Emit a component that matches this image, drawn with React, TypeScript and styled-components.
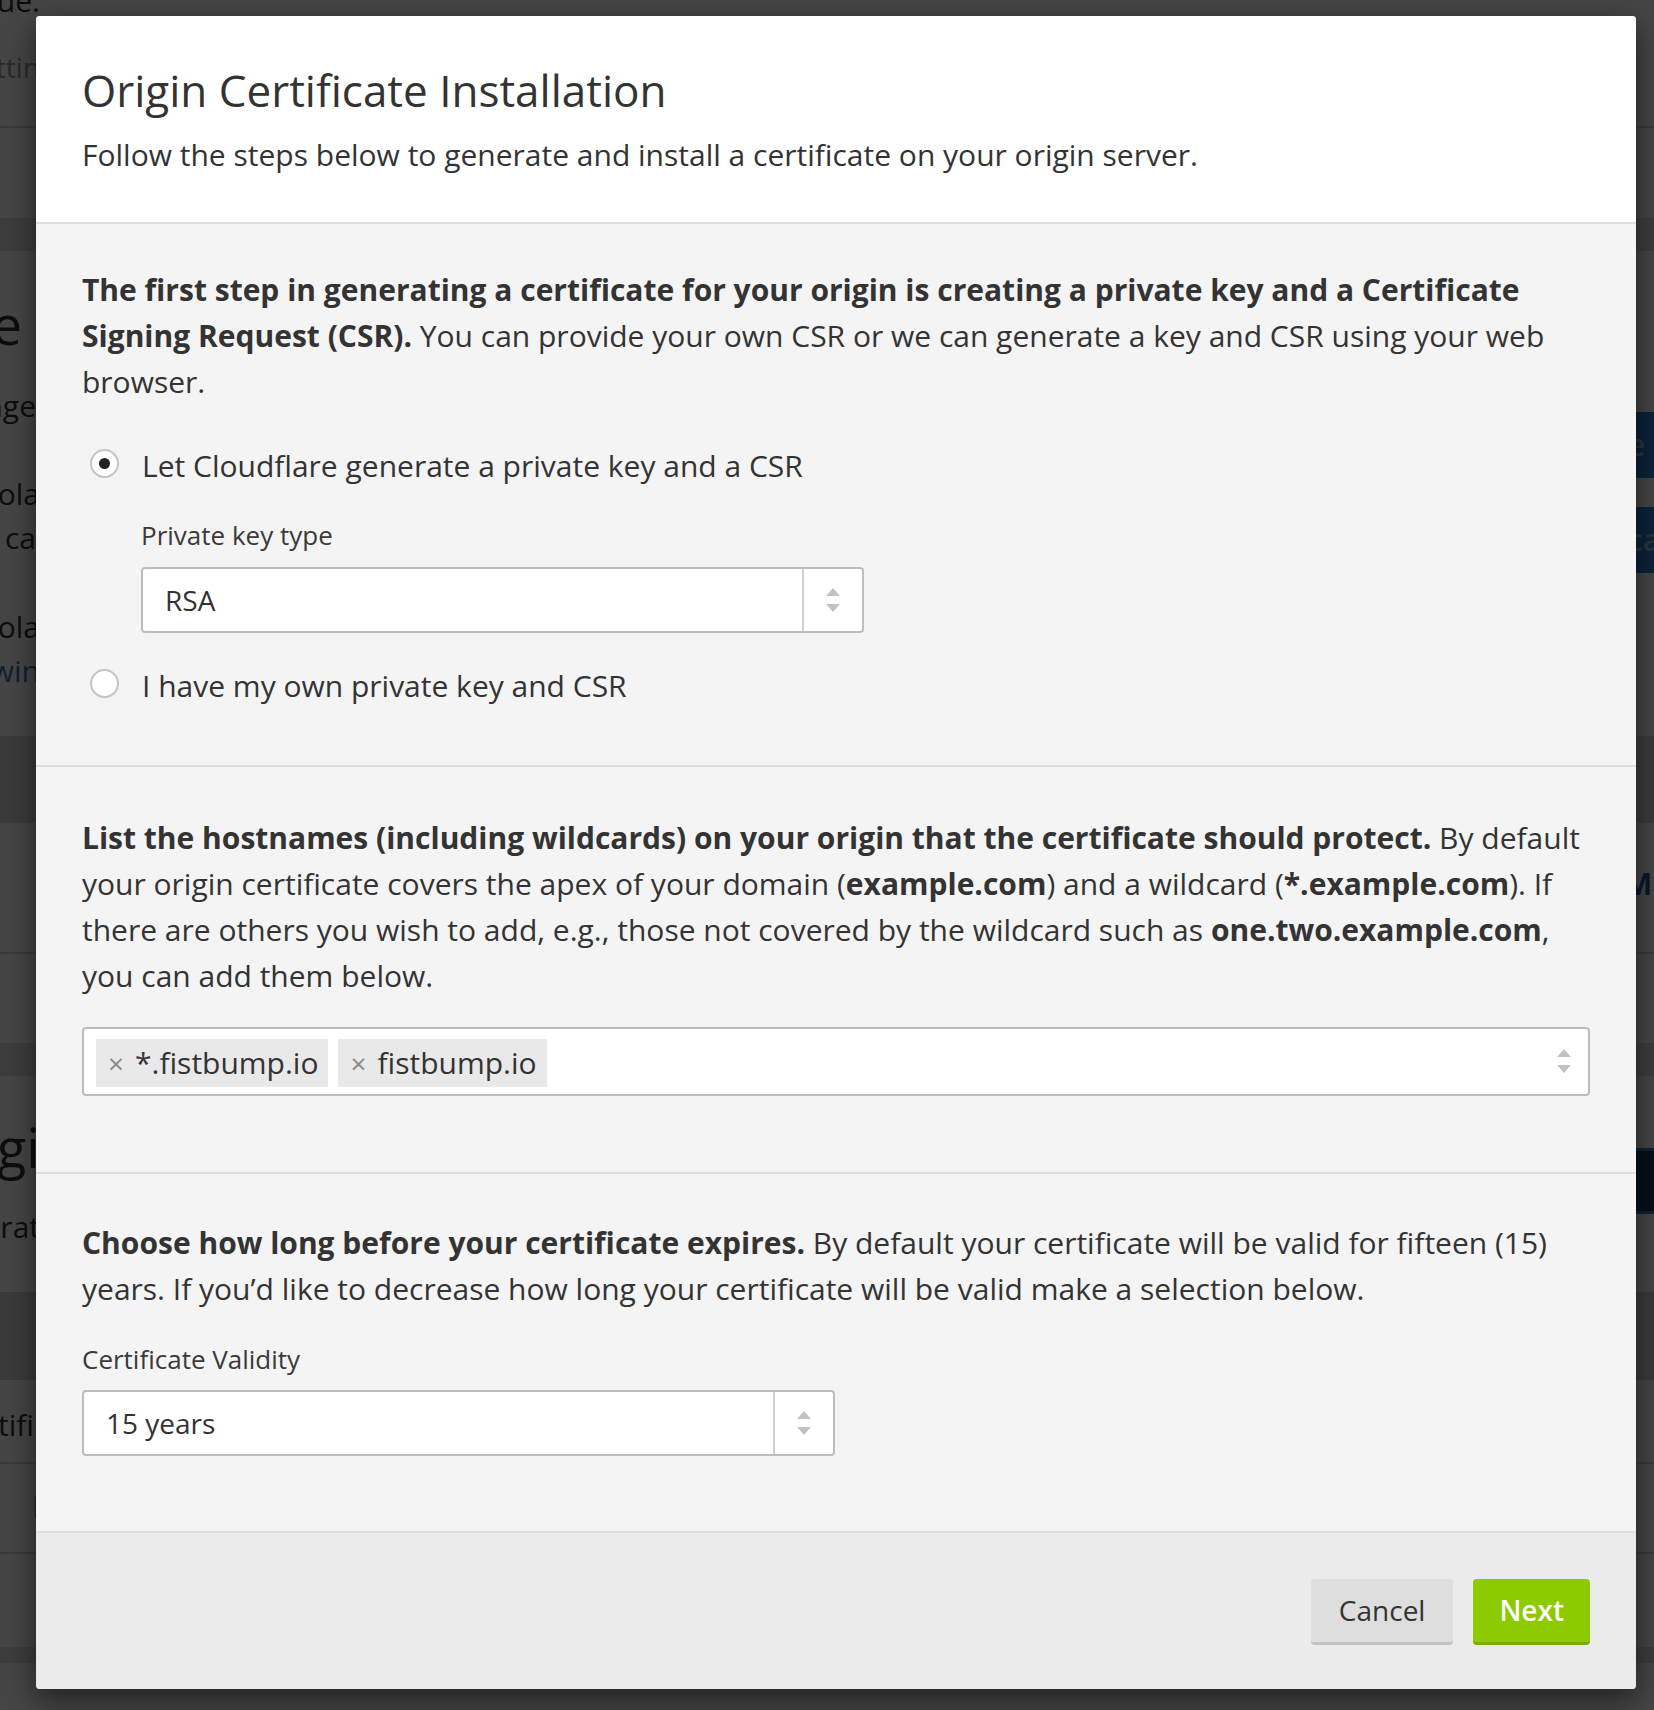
import React from 'react'
import styled, { createGlobalStyle, css } from 'styled-components'

const GlobalStyle = createGlobalStyle`
	html, body {
		margin: 0;
		padding: 0;
	}

	body {
		background: #444;
		font-family: 'Open Sans', 'Liberation Sans', sans-serif;
		color: #333;
	}
`

/* ---------- page behind the overlay ---------- */

const Screen = styled.div`
	position: relative;
	width: 1654px;
	height: 1710px;
	overflow: hidden;
	background: #fff;
`

const Page = styled.div`
	display: flex;
	flex-direction: column;
`

const PageRow = styled.div<{ $h: number; $tone?: string; $line?: boolean }>`
	height: ${p => p.$h}px;
	background: ${p => p.$tone || '#fff'};
	border-bottom: ${p => (p.$line ? '2px solid #d6d6d6' : 'none')};
	display: flex;
	justify-content: space-between;
	overflow: hidden;
`

const LeftCell = styled.div`
	width: 40px;
	display: flex;
	flex-direction: column;
	align-items: flex-end;
	overflow: hidden;
	white-space: nowrap;
`

const RightCell = styled.div`
	width: 30px;
	display: flex;
	flex-direction: column;
	align-items: flex-start;
	overflow: hidden;
	white-space: nowrap;
`

const Frag = styled.span<{ $size?: number; $color?: string; $top?: number; $weight?: number; $end?: number }>`
	display: block;
	font-size: ${p => p.$size || 30}px;
	line-height: 1.4;
	font-weight: ${p => p.$weight || 400};
	color: ${p => p.$color || '#333'};
	margin-top: ${p => p.$top || 0}px;
	margin-right: ${p => p.$end || 0}px;
`

const BlueBlock = styled.div<{ $top: number; $outline?: boolean }>`
	margin-top: ${p => p.$top}px;
	height: 66px;
	width: 120px;
	border-radius: 6px;
	font-size: 30px;
	font-weight: 600;
	line-height: 66px;
	padding-left: 4px;
	color: #9ac2ea;
	${p =>
		p.$outline
			? css`
					background: #163c63;
					border: 3px solid #3b7fc4;
					box-sizing: border-box;
			  `
			: css`
					background: #2b82d6;
			  `}
`

const Overlay = styled.div`
	position: absolute;
	inset: 0;
	background: rgba(0, 0, 0, 0.73);
`

/* ---------- modal ---------- */

const Modal = styled.div`
	position: absolute;
	left: 36px;
	top: 16px;
	width: 1600px;
	background: #f4f4f4;
	border-radius: 4px;
	overflow: hidden;
	box-shadow: 0 10px 30px rgba(0, 0, 0, 0.55);
`

const Header = styled.header`
	background: #fff;
	padding: 48px 46px 44px;
	border-bottom: 2px solid #dedede;
`

const Title = styled.h1`
	margin: 0;
	font-size: 44px;
	line-height: 52px;
	font-weight: 400;
	color: #333;
`

const Lead = styled.p`
	margin: 16px 0 0;
	font-size: 30px;
	line-height: 46px;
	color: #333;
`

const Section = styled.section<{ $top: number; $bottom: number; $divider?: boolean }>`
	padding: ${p => p.$top}px 46px ${p => p.$bottom}px;
	border-bottom: ${p => (p.$divider ? '2px solid #dedede' : 'none')};
`

const Text = styled.p`
	margin: 0;
	font-size: 30px;
	line-height: 46px;
	color: #333;

	strong {
		font-weight: 700;
	}
`

const RadioRow = styled.label<{ $top: number }>`
	display: flex;
	align-items: flex-start;
	margin-top: ${p => p.$top}px;
	font-size: 30px;
	line-height: 46px;
	color: #333;
`

const RadioMark = styled.span<{ $checked?: boolean }>`
	flex-shrink: 0;
	box-sizing: border-box;
	width: 29px;
	height: 29px;
	margin: 6px 23px 0 8px;
	border: 2px solid #c4c4c4;
	border-radius: 50%;
	background: #fff;
	display: flex;
	align-items: center;
	justify-content: center;

	&::after {
		content: '';
		display: ${p => (p.$checked ? 'block' : 'none')};
		width: 11px;
		height: 11px;
		border-radius: 50%;
		background: #222;
	}
`

const SubField = styled.div`
	padding-left: 59px;
	margin-top: 28px;
`

const FieldLabel = styled.div<{ $top?: number }>`
	margin-top: ${p => p.$top || 0}px;
	font-size: 26px;
	line-height: 36px;
	color: #3a3a3a;
`

const SelectBox = styled.div<{ $width: number; $top: number }>`
	box-sizing: border-box;
	display: flex;
	width: ${p => p.$width}px;
	height: 66px;
	margin-top: ${p => p.$top}px;
	background: #fff;
	border: 2px solid #bdbdbd;
	border-radius: 4px;
`

const SelectValue = styled.div`
	flex: 1;
	padding-left: 22px;
	font-size: 28px;
	line-height: 62px;
	color: #333;
`

const ArrowCell = styled.div<{ $divider?: boolean }>`
	display: flex;
	flex-direction: column;
	align-items: center;
	justify-content: center;
	gap: 8px;
	width: 58px;
	border-left: ${p => (p.$divider ? '2px solid #cfcfcf' : 'none')};
`

const Triangle = styled.span<{ $down?: boolean }>`
	width: 0;
	height: 0;
	border-left: 7.5px solid transparent;
	border-right: 7.5px solid transparent;
	${p =>
		p.$down
			? css`
					border-top: 8px solid #c2c2c2;
			  `
			: css`
					border-bottom: 8px solid #c2c2c2;
			  `}
`

const TagInput = styled.div`
	box-sizing: border-box;
	display: flex;
	align-items: flex-start;
	gap: 10px;
	height: 69px;
	margin-top: 28px;
	padding: 10px 0 0 12px;
	background: #fff;
	border: 2px solid #bdbdbd;
	border-radius: 4px;
`

const Tag = styled.span`
	display: flex;
	align-items: center;
	gap: 11px;
	height: 48px;
	padding: 0 10px 0 12px;
	background: #e9e9e9;
	font-size: 30px;
	line-height: 48px;
	color: #333;
`

const TagRemove = styled.span`
	color: #8a8a8a;
	font-size: 28px;
`

const TagArrows = styled.div`
	display: flex;
	flex-direction: column;
	gap: 8px;
	margin: 10px 17px 0 auto;
`

const Footer = styled.footer`
	display: flex;
	justify-content: flex-end;
	gap: 20px;
	padding: 46px 46px 44px;
	background: #ebebeb;
	border-top: 2px solid #dedede;
`

const Button = styled.button<{ $primary?: boolean }>`
	box-sizing: border-box;
	height: 66px;
	border: none;
	border-radius: 4px;
	font-family: inherit;
	font-size: 28px;
	line-height: 63px;
	cursor: pointer;
	${p =>
		p.$primary
			? css`
					padding: 0 26px;
					background: #8dca00;
					border-bottom: 3px solid #78ad00;
					color: #fff;
					font-weight: 600;
			  `
			: css`
					padding: 0 28px;
					background: #dedede;
					border-bottom: 3px solid #c2c2c2;
					color: #333;
					font-weight: 400;
			  `}
`

const SelectArrows = ({ divider }: { divider?: boolean }) => (
	<ArrowCell $divider={divider}>
		<Triangle />
		<Triangle $down />
	</ArrowCell>
)

const hostnames = ['*.fistbump.io', 'fistbump.io']

export default function App() {
	return (
		<Screen>
			<GlobalStyle />
			<Page>
				<PageRow $h={40}>
					<LeftCell><Frag $top={-20}>Value.</Frag></LeftCell>
					<RightCell />
				</PageRow>
				<PageRow $h={86} $line>
					<LeftCell><Frag $size={28} $color="#9a9a9a" $top={8}>Settin</Frag></LeftCell>
					<RightCell />
				</PageRow>
				<PageRow $h={90} />
				<PageRow $h={33} $tone="#e2e2e2" />
				<PageRow $h={485}>
					<LeftCell>
						<Frag $size={54} $top={36} $end={18}>Site</Frag>
						<Frag $top={22} $end={4}>Change</Frag>
						<Frag $top={46}>Sola</Frag>
						<Frag $top={2} $end={4}>your ca</Frag>
						<Frag $top={47}>Sola</Frag>
						<Frag $top={2} $color="#2f7bbf">Brwin</Frag>
					</LeftCell>
					<RightCell>
						<BlueBlock $top={161}>e</BlueBlock>
						<BlueBlock $top={29}>ca</BlueBlock>
					</RightCell>
				</PageRow>
				<PageRow $h={87} $tone="#d9d9d9" />
				<PageRow $h={129} $line>
					<LeftCell />
					<RightCell><Frag $top={40} $color="#1f5d98" $weight={700}>M</Frag></RightCell>
				</PageRow>
				<PageRow $h={89} />
				<PageRow $h={33} $tone="#e2e2e2" />
				<PageRow $h={216}>
					<LeftCell>
						<Frag $size={54} $top={34}>Origi</Frag>
						<Frag $top={20}>Generat</Frag>
					</LeftCell>
					<RightCell><BlueBlock $top={72} $outline /></RightCell>
				</PageRow>
				<PageRow $h={88} $tone="#d9d9d9" />
				<PageRow $h={82} $line>
					<LeftCell><Frag $top={24} $end={6}>Certifi</Frag></LeftCell>
					<RightCell />
				</PageRow>
				<PageRow $h={88} $line>
					<LeftCell><Frag $top={22} $color="#2f7bbf">l</Frag></LeftCell>
					<RightCell />
				</PageRow>
				<PageRow $h={93} />
				<PageRow $h={16} $tone="#e2e2e2" />
				<PageRow $h={60} />
			</Page>
			<Overlay />

			<Modal>
				<Header>
					<Title>Origin Certificate Installation</Title>
					<Lead>Follow the steps below to generate and install a certificate on your origin server.</Lead>
				</Header>

				<Section $top={43} $bottom={56} $divider>
					<Text>
						<strong>The first step in generating a certificate for your origin is creating a private key and a Certificate Signing Request (CSR).</strong> You can provide your own CSR or we can generate a key and CSR using your web browser.
					</Text>
					<RadioRow $top={38}>
						<RadioMark $checked />
						Let Cloudflare generate a private key and a CSR
					</RadioRow>
					<SubField>
						<FieldLabel>Private key type</FieldLabel>
						<SelectBox $width={723} $top={14}>
							<SelectValue>RSA</SelectValue>
							<SelectArrows divider />
						</SelectBox>
					</SubField>
					<RadioRow $top={30}>
						<RadioMark />
						I have my own private key and CSR
					</RadioRow>
				</Section>

				<Section $top={48} $bottom={76} $divider>
					<Text>
						<strong>List the hostnames (including wildcards) on your origin that the certificate should protect.</strong> By default your origin certificate covers the apex of your domain (<strong>example.com</strong>) and a wildcard (<strong>*.example.com</strong>). If there are others you wish to add, e.g., those not covered by the wildcard such as <strong>one.two.example.com</strong>, you can add them below.
					</Text>
					<TagInput>
						{hostnames.map(h => (
							<Tag key={h}>
								<TagRemove>×</TagRemove>
								{h}
							</Tag>
						))}
						<TagArrows>
							<Triangle />
							<Triangle $down />
						</TagArrows>
					</TagInput>
				</Section>

				<Section $top={46} $bottom={75}>
					<Text>
						<strong>Choose how long before your certificate expires.</strong> By default your certificate will be valid for fifteen (15) years. If you’d like to decrease how long your certificate will be valid make a selection below.
					</Text>
					<FieldLabel $top={29}>Certificate Validity</FieldLabel>
					<SelectBox $width={753} $top={13}>
						<SelectValue>15 years</SelectValue>
						<SelectArrows divider />
					</SelectBox>
				</Section>

				<Footer>
					<Button>Cancel</Button>
					<Button $primary>Next</Button>
				</Footer>
			</Modal>
		</Screen>
	)
}
